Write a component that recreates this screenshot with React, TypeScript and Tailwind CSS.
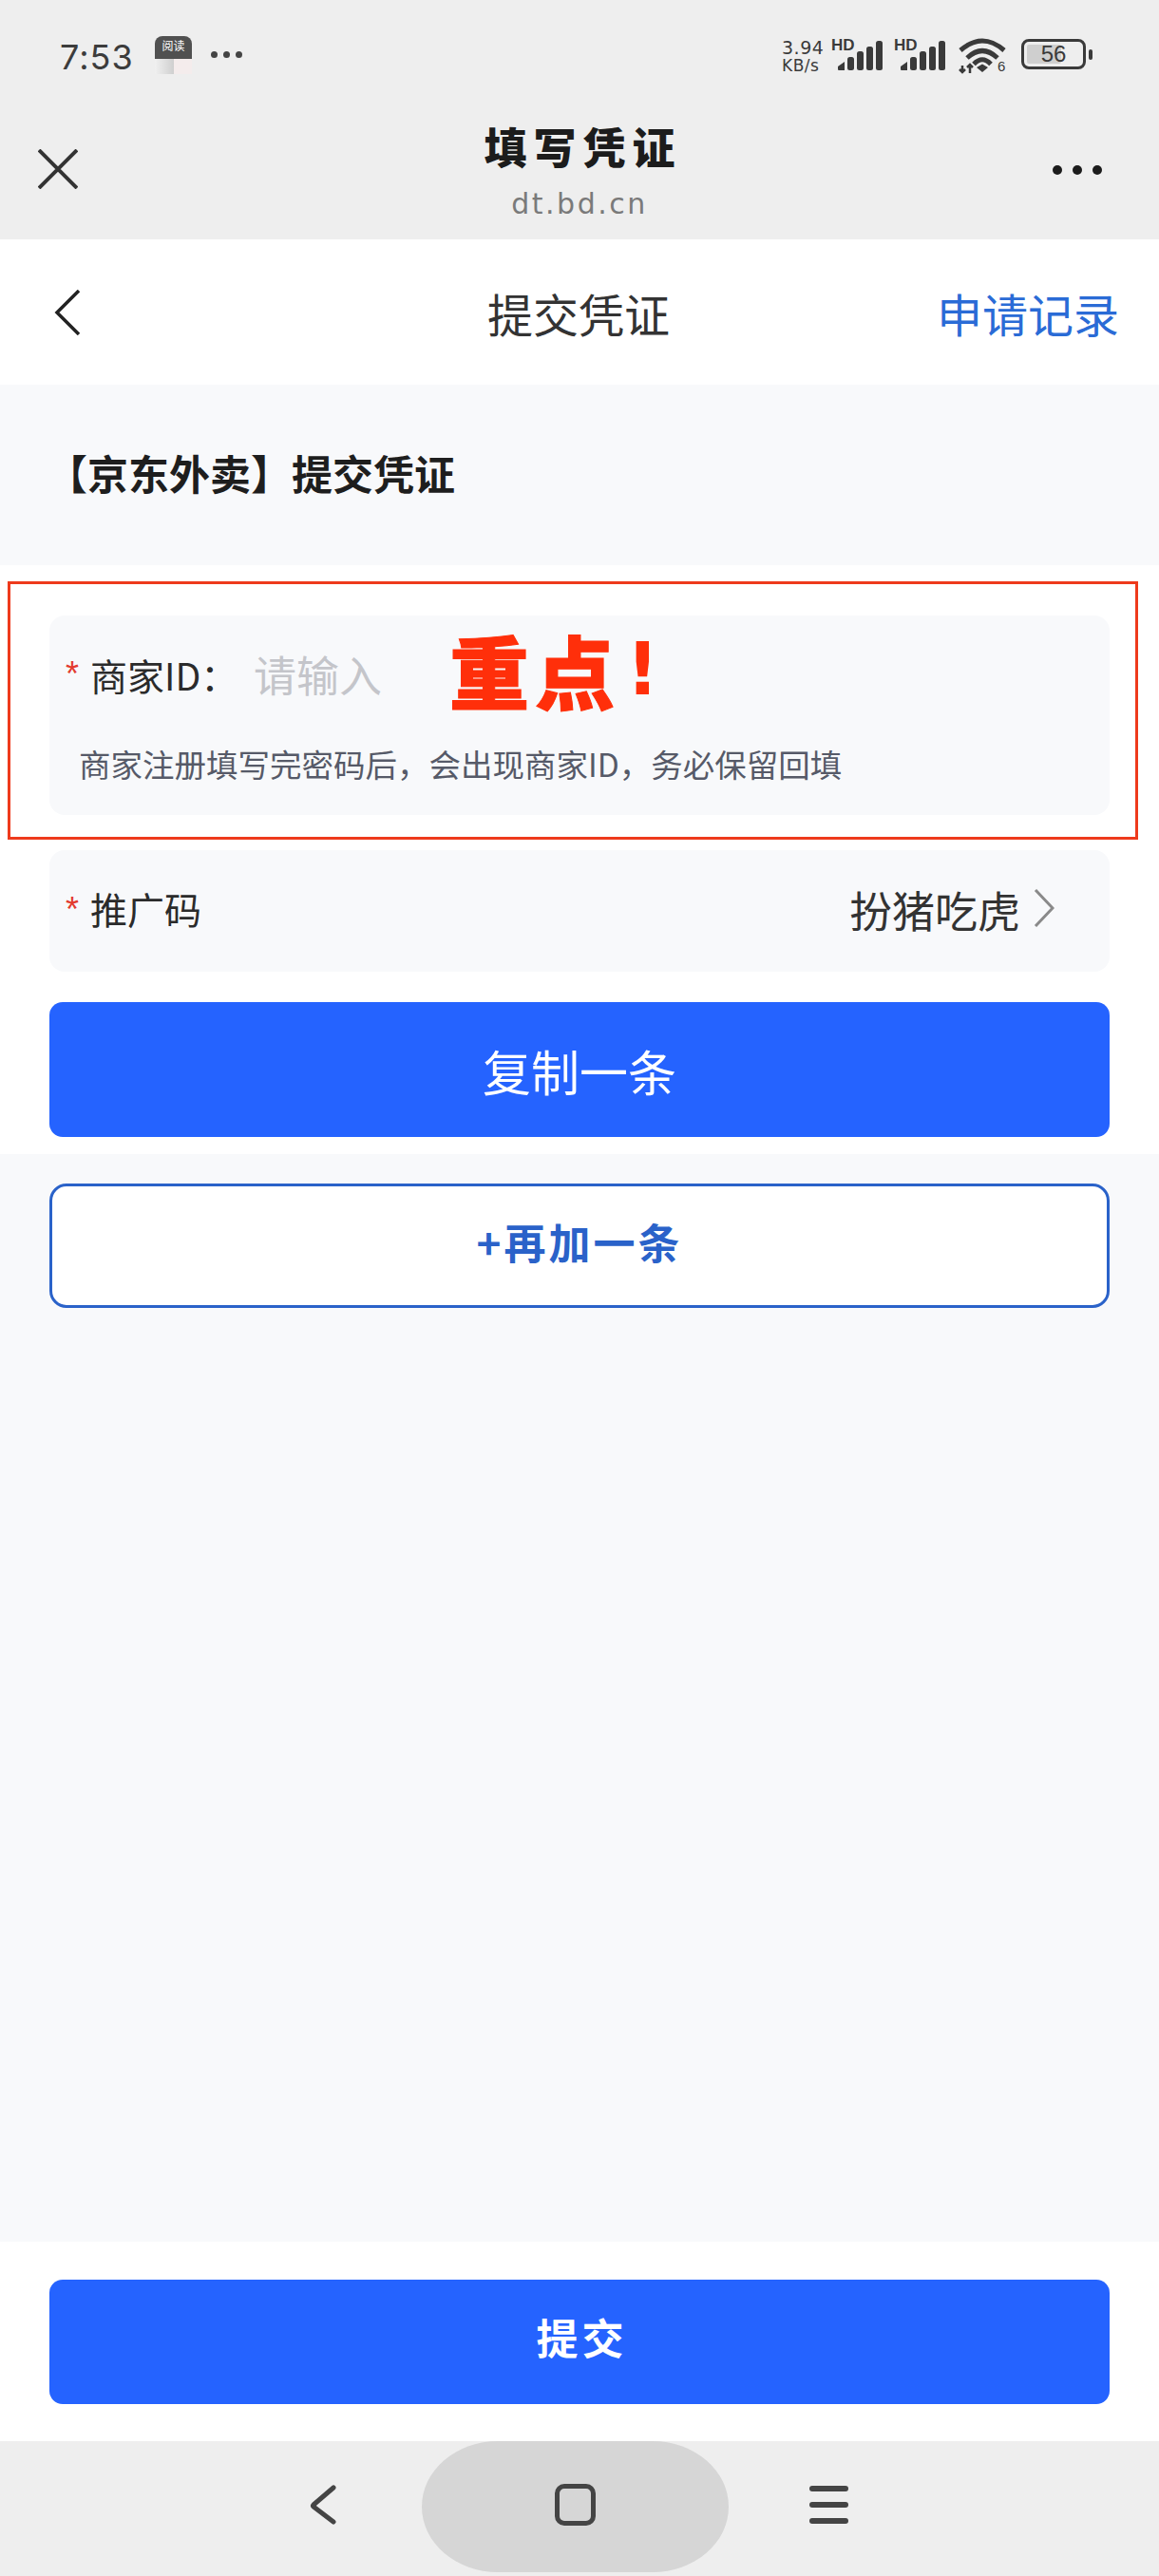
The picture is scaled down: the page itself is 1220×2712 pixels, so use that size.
import React from "react";

const cjk = "font-['Noto_Sans_CJK_SC',sans-serif]";

function Bars() {
  return (
    <svg width="50" height="32" viewBox="0 0 50 32" fill="#3a3a3a">
      <path d="M0 27 L7 22 L7 31 L1 31 Q0 31 0 30 Z" />
      <rect x="10" y="17" width="7" height="14" rx="2.5" />
      <rect x="20" y="11" width="7" height="20" rx="2.5" />
      <rect x="30" y="6" width="7" height="25" rx="2.5" />
      <rect x="40" y="0" width="7" height="31" rx="2.5" />
    </svg>
  );
}

function Wifi() {
  return (
    <svg width="50" height="38" viewBox="0 0 50 38" fill="none" stroke="#3a3a3a" strokeWidth="5">
      <path d="M2 13 Q25 -7 48 13" />
      <path d="M9 21 Q25 6 41 21" />
      <path d="M16 27.5 Q25 18 34 27.5" />
      <path d="M19 31 L25 27.5 L31 31 L25 36 Z" fill="#3a3a3a" stroke="none" />
      <path d="M4 29 V36 M1 33 L4 36 L7 33" strokeWidth="2.5" />
      <path d="M12 37 V28 M9 31 L12 28 L15 31" strokeWidth="2.5" />
    </svg>
  );
}

export default function App() {
  return (
    <div className={`w-[1220px] h-[2712px] flex flex-col bg-[#f8f9fb] overflow-hidden ${cjk}`}>
      {/* system + browser header */}
      <div className="h-[252px] bg-[#eeeeee] shrink-0 flex flex-col">
        <div className="h-[122px] pt-[38px] pl-[63px] pr-[70px] flex items-start">
          <span className="mt-[2px] w-[100px] text-[36px] leading-[40px] tracking-[1px] text-[#3c3c3c] font-['Inter',sans-serif]">7:53</span>
          <div className="w-[39px] h-[40px] rounded-t-[8px] overflow-hidden flex flex-col">
            <div className="h-[24px] bg-[#505050] text-white text-[12px] leading-[20px] text-center">阅读</div>
            <div className="flex-1 flex">
              <div className="w-[20px] bg-gradient-to-r from-[#f0f0f0] to-[#cfcfcf]" />
              <div className="flex-1 bg-[#f4ecec]" />
            </div>
          </div>
          <div className="ml-[20px] mt-[16px] flex gap-[6px]">
            <span className="w-[7px] h-[7px] rounded-full bg-[#444]" />
            <span className="w-[7px] h-[7px] rounded-full bg-[#444]" />
            <span className="w-[7px] h-[7px] rounded-full bg-[#444]" />
          </div>
          <div className="ml-auto flex items-start text-[#3a3a3a]">
            <div className="mt-[3px] w-[52px] text-[19px] leading-[18px] tracking-[0.5px] font-['DejaVu_Sans',sans-serif]">
              <div>3.94</div>
              <div className="text-[17px] leading-[20px]">KB/s</div>
            </div>
            <div className="relative w-[59px] h-[36px] mt-[5px]">
              <span className="absolute left-0 -top-[2px] text-[17px] leading-[14px] font-bold font-['Liberation_Sans',sans-serif]">HD</span>
              <div className="absolute left-[7px] top-0"><Bars /></div>
            </div>
            <div className="relative w-[68px] h-[36px] mt-[5px] ml-[7px]">
              <span className="absolute left-0 -top-[2px] text-[17px] leading-[14px] font-bold font-['Liberation_Sans',sans-serif]">HD</span>
              <div className="absolute left-[7px] top-0"><Bars /></div>
            </div>
            <div className="relative w-[66px] mt-[2px]">
              <Wifi />
              <span className="absolute left-[41px] top-[22px] text-[15px] leading-[16px] font-['Liberation_Sans',sans-serif]">6</span>
            </div>
            <div className="flex items-center mt-[3px]">
              <div className="w-[68px] h-[32px] rounded-[8px] border-[3px] border-[#3a3a3a] p-[3px] relative">
                <div className="w-[36px] h-full bg-[#cfcfcf] rounded-[2px]" />
                <span className="absolute inset-0 text-center text-[24px] leading-[26px] font-['Liberation_Sans',sans-serif]">56</span>
              </div>
              <div className="ml-[3px] w-[4px] h-[11px] rounded-[2px] bg-[#3a3a3a]" />
            </div>
          </div>
        </div>
        <div className="relative flex-1 flex items-start">
          <svg className="ml-[40px] mt-[35px]" width="42" height="42" viewBox="0 0 42 42" fill="none" stroke="#333" strokeWidth="4">
            <path d="M1 1 L41 41 M41 1 L1 41" />
          </svg>
          <div className="flex-1 flex flex-col items-center -ml-[82px]">
            <div className="text-[45px] leading-[56px] font-black tracking-[7px] pl-[7px] text-[#1c1c1c] mt-[4px]">填写凭证</div>
            <div className="text-[30px] leading-[36px] tracking-[2.5px] text-[#7a7a7a] mt-[15px] font-['DejaVu_Sans',sans-serif]">dt.bd.cn</div>
          </div>
          <div className="absolute left-[1108px] top-[52px] flex gap-[11px]">
            <span className="w-[10px] h-[10px] rounded-full bg-[#1c1c1c]" />
            <span className="w-[10px] h-[10px] rounded-full bg-[#1c1c1c]" />
            <span className="w-[10px] h-[10px] rounded-full bg-[#1c1c1c]" />
          </div>
        </div>
      </div>

      {/* page nav */}
      <div className="h-[153px] bg-white shrink-0 flex items-center relative pl-[57px] pr-[42px]">
        <svg width="28" height="48" viewBox="0 0 28 48" fill="none" stroke="#222" strokeWidth="3.5">
          <path d="M26 1 L3 24 L26 47" />
        </svg>
        <div className="absolute left-0 right-0 text-center text-[48px] leading-[60px] text-[#333] -translate-x-[1px]">提交凭证</div>
        <div className="ml-auto text-[48px] leading-[60px] text-[#2a6bd6]">申请记录</div>
      </div>

      {/* section title */}
      <div className="h-[190px] shrink-0 flex items-center pl-[49px] pb-[6px] text-[43px] font-bold text-[#1e1e1e]">【京东外卖】提交凭证</div>

      {/* form */}
      <div className="bg-white shrink-0 pt-[17px] pb-[18px]">
        <div className="relative ml-[8px] w-[1190px] h-[272px] border-[3px] border-[#ee3a1c] pl-[41px] pt-[33px]">
          <div className="w-[1116px] h-[210px] bg-[#f8f9fb] rounded-[16px] pl-[17px]">
            <div className="flex items-center pt-[30px] h-[93px]">
              <span className="text-[#e33b2e] text-[36px] leading-[36px] w-[26px] font-['Liberation_Sans',sans-serif]">*</span>
              <span className="text-[39px] leading-[48px] text-[#2b2b2b] w-[172px]">商家ID：</span>
              <span className="text-[45px] leading-[52px] text-[#c4c5ca]">请输入</span>
            </div>
            <div className="mt-[41px] ml-[14px] text-[33.5px] leading-[44px] text-[#565a68] whitespace-nowrap">商家注册填写完密码后，会出现商家ID，务必保留回填</div>
          </div>
          <div className="absolute left-[462px] top-[40px] flex items-center text-[#ff2f0a] font-black leading-[100px]">
            <span className="text-[84px] tracking-[6px] [-webkit-text-stroke:1px_#ff2f0a]">重点</span>
            <span className="text-[76px] ml-[6px] font-['DejaVu_Sans',sans-serif]">!</span>
          </div>
        </div>

        <div className="mt-[11px] ml-[52px] w-[1116px] h-[128px] bg-[#f8f9fb] rounded-[16px] pl-[17px] pr-[58px] flex items-center">
          <span className="text-[#e33b2e] text-[36px] leading-[36px] w-[26px] -mt-[3px] font-['Liberation_Sans',sans-serif]">*</span>
          <span className="text-[39px] leading-[48px] text-[#2b2b2b] -mt-[6px]">推广码</span>
          <span className="ml-auto text-[45px] leading-[52px] text-[#333] -mt-[3px]">扮猪吃虎</span>
          <svg className="ml-[14px] -mt-[6px]" width="22" height="40" viewBox="0 0 22 40" fill="none" stroke="#8a8a8a" strokeWidth="3">
            <path d="M2 1 L20 20 L2 39" />
          </svg>
        </div>

        <div className="mt-[32px] ml-[52px] w-[1116px] h-[142px] rounded-[14px] bg-[#2563ff] flex items-center justify-center pt-[2px] text-[51px] text-white">复制一条</div>
      </div>

      {/* add */}
      <div className="mt-[31px] ml-[52px] w-[1116px] h-[131px] rounded-[18px] border-[3px] border-[#2a62c9] bg-white flex items-center justify-center pb-[10px] text-[44px] font-bold text-[#2a62c9] tracking-[3px]">+再加一条</div>

      <div className="flex-1" />

      {/* submit */}
      <div className="h-[210px] shrink-0 bg-white pt-[40px]">
        <div className="ml-[52px] w-[1116px] h-[131px] rounded-[14px] bg-[#2563ff] flex items-center justify-center pb-[12px] pl-[5px] text-[44px] font-bold text-white tracking-[4px]">提交</div>
      </div>

      {/* system nav */}
      <div className="h-[142px] shrink-0 bg-[#eeeeee] flex items-start pl-[326px]">
        <svg className="mt-[46px]" width="28" height="42" viewBox="0 0 28 42" fill="none" stroke="#444" strokeWidth="5" strokeLinecap="round" strokeLinejoin="round">
          <path d="M25 3 L4 21 Q3 22 4 23 L25 39" />
        </svg>
        <div className="ml-[90px] w-[323px] h-[138px] bg-[#d6d6d6] rounded-[80px/69px] flex items-center justify-center">
          <div className="w-[43px] h-[44px] rounded-[10px] border-[5px] border-[#444] -mt-[4px] -ml-[1px]" />
        </div>
        <div className="ml-[85px] mt-[47px] w-[41px] flex flex-col gap-[11px]">
          <div className="h-[6px] rounded-full bg-[#444]" />
          <div className="h-[6px] rounded-full bg-[#444]" />
          <div className="h-[6px] rounded-full bg-[#444]" />
        </div>
      </div>
    </div>
  );
}
